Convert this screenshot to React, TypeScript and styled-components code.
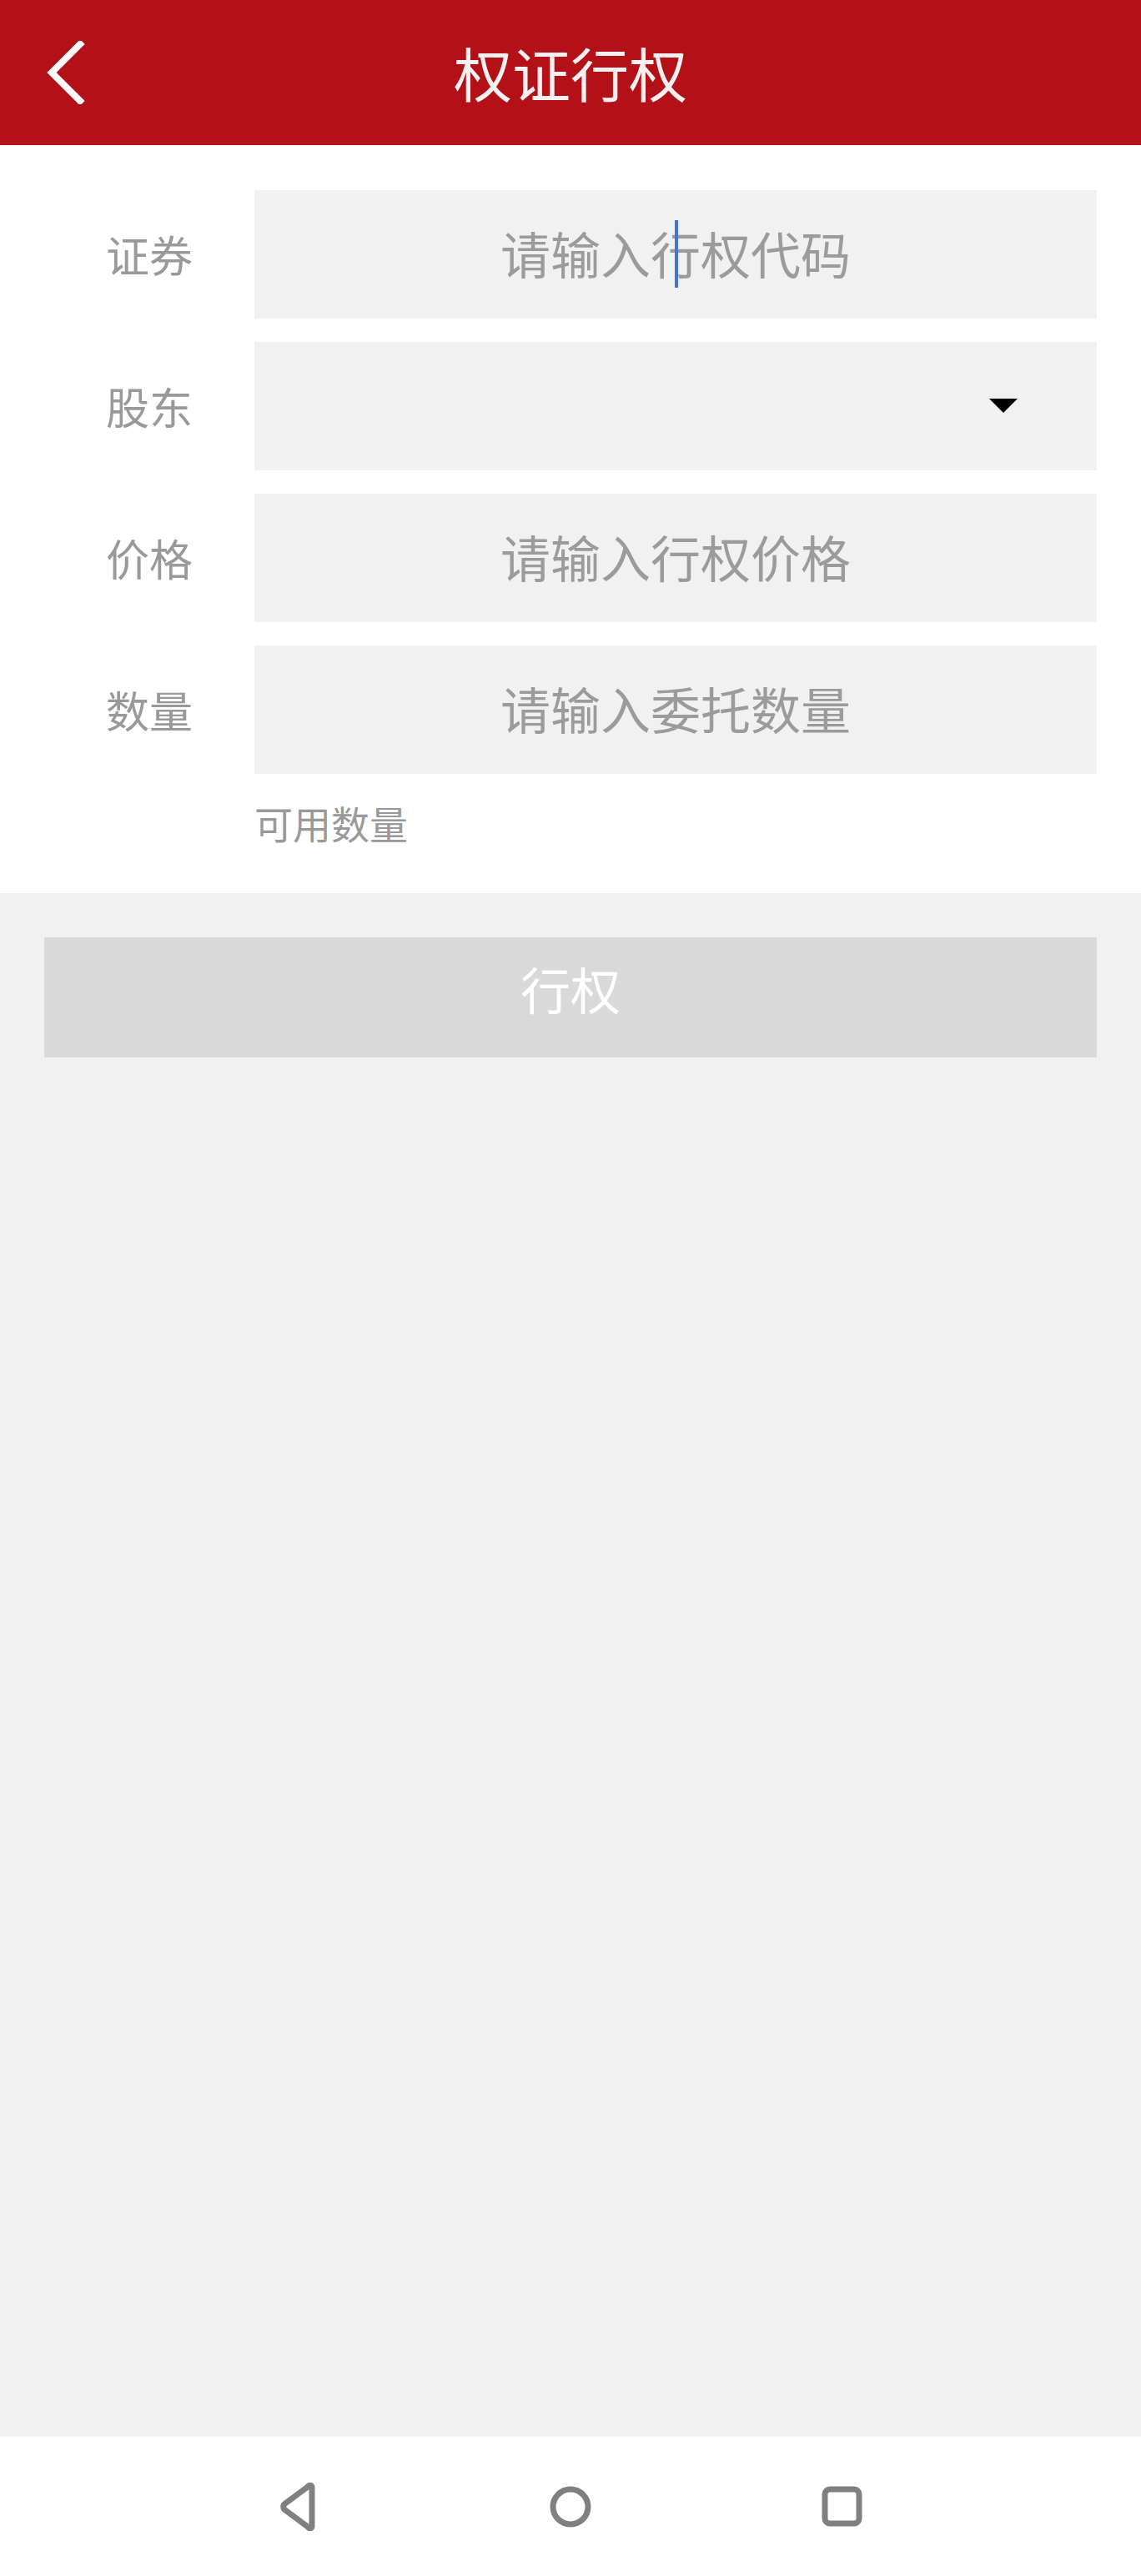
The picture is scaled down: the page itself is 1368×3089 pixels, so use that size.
import { createGlobalStyle } from 'styled-components';
import styled from 'styled-components';

const GlobalStyle = createGlobalStyle`
  html, body {
    margin: 0;
    padding: 0;
    background: #f1f1f1;
  }
  body {
    font-family: "Noto Sans CJK SC", "Noto Sans", sans-serif;
  }
`;

type Field = {
  label: string;
  placeholder?: string;
  select?: boolean;
  caret?: boolean;
};

const fields: Field[] = [
  { label: '证券', placeholder: '请输入行权代码', caret: true },
  { label: '股东', select: true },
  { label: '价格', placeholder: '请输入行权价格' },
  { label: '数量', placeholder: '请输入委托数量' },
];

const App = () => {
  return (
    <Page>
      <GlobalStyle />
      <Header>
        <BackButton aria-label="返回">
          <svg width="46" height="76" viewBox="0 0 46 76">
            <path
              d="M40 4 L6 38 L40 72"
              fill="none"
              stroke="#ffffff"
              strokeWidth="8"
              strokeLinecap="square"
            />
          </svg>
        </BackButton>
        <Title>权证行权</Title>
        <HeaderSpacer />
      </Header>

      <FormSection>
        {fields.map((f) => (
          <Row key={f.label}>
            <Label>{f.label}</Label>
            <InputBox $select={f.select}>
              {f.placeholder && <Placeholder>{f.placeholder}</Placeholder>}
              {f.caret && <Caret />}
              {f.select && (
                <svg width="34" height="18" viewBox="0 0 34 18">
                  <polygon points="0,0 34,0 17,17" fill="#000" />
                </svg>
              )}
            </InputBox>
          </Row>
        ))}
        <Hint>可用数量</Hint>
      </FormSection>

      <Body>
        <SubmitButton>行权</SubmitButton>
      </Body>

      <NavBar>
        <NavIcon aria-label="back">
          <svg width="48" height="58" viewBox="0 0 48 58">
            <path
              d="M40 6 C40 3 37 2 35 5 L8 25 C5 27 5 31 8 33 L35 53 C37 56 40 55 40 52 Z"
              fill="none"
              stroke="#808080"
              strokeWidth="7"
              strokeLinejoin="round"
            />
          </svg>
        </NavIcon>
        <NavIcon aria-label="home">
          <svg width="54" height="54" viewBox="0 0 54 54">
            <circle cx="27" cy="27" r="21" fill="none" stroke="#808080" strokeWidth="7" />
          </svg>
        </NavIcon>
        <NavIcon aria-label="recent">
          <svg width="52" height="52" viewBox="0 0 52 52">
            <rect x="5" y="5" width="41" height="41" rx="6" fill="none" stroke="#808080" strokeWidth="7" />
          </svg>
        </NavIcon>
      </NavBar>
    </Page>
  );
};

export default App;

const Page = styled.div`
  display: flex;
  flex-direction: column;
  width: 1368px;
  min-height: 3089px;
  background: #f1f1f1;
`;

const Header = styled.header`
  display: grid;
  grid-template-columns: 1fr auto 1fr;
  align-items: center;
  height: 174px;
  background: #b31017;
`;

const BackButton = styled.button`
  all: unset;
  display: flex;
  align-items: center;
  justify-self: start;
  padding-left: 56px;
  cursor: pointer;
`;

const HeaderSpacer = styled.div``;

const Title = styled.h1`
  margin: 0;
  font-size: 70px;
  font-weight: 400;
  line-height: 1;
  color: #f6f1f1;
  letter-spacing: 0;
`;

const FormSection = styled.section`
  display: flex;
  flex-direction: column;
  gap: 28px;
  padding: 54px 53px 51px 0;
  background: #ffffff;
`;

const Row = styled.div`
  display: flex;
  align-items: center;
`;

const Label = styled.span`
  width: 305px;
  box-sizing: border-box;
  padding-left: 127px;
  font-size: 52px;
  line-height: 1;
  color: #999999;
`;

const InputBox = styled.div<{ $select?: boolean }>`
  position: relative;
  flex: 1;
  height: 154px;
  display: flex;
  align-items: center;
  justify-content: ${({ $select }) => ($select ? 'flex-end' : 'center')};
  padding-right: ${({ $select }) => ($select ? '95px' : '0')};
  background: #f1f1f1;
`;

const Placeholder = styled.span`
  font-size: 60px;
  line-height: 1;
  padding-bottom: 4px;
  color: #9b9b9b;
`;

const Caret = styled.span`
  position: absolute;
  left: 504px;
  top: 36px;
  width: 4px;
  height: 81px;
  background: #4a6fd6;
`;

const Hint = styled.div`
  margin-left: 305px;
  font-size: 46px;
  line-height: 60px;
  padding-bottom: 4px;
  color: #999999;
`;

const Body = styled.main`
  flex: 1;
  padding: 53px 53px 0;
  background: #f1f1f1;
`;

const SubmitButton = styled.button`
  all: unset;
  display: flex;
  align-items: center;
  justify-content: center;
  box-sizing: border-box;
  width: 100%;
  height: 144px;
  padding-bottom: 22px;
  background: #d9d9d9;
  font-family: "Noto Sans CJK SC", sans-serif;
  font-size: 60px;
  line-height: 1;
  color: #ffffff;
  cursor: pointer;
`;

const NavBar = styled.nav`
  display: flex;
  align-items: center;
  justify-content: center;
  gap: 272px;
  height: 167px;
  background: #ffffff;
`;

const NavIcon = styled.button`
  all: unset;
  display: flex;
  align-items: center;
  justify-content: center;
  width: 54px;
  height: 58px;
  cursor: pointer;
`;
